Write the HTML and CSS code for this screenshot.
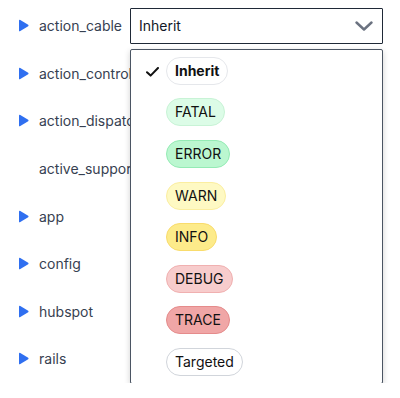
FILE: index.html
```html
<!DOCTYPE html>
<html lang="en">
<head>
    <meta charset="UTF-8">
    <meta name="viewport" content="width=device-width, initial-scale=1.0">
    <title>Log levels</title>
    <link rel="stylesheet" href="styles.css">
</head>
<body>
    <div class="tree">
        <div class="row">
            <span class="toggle"><svg width="11" height="13" viewBox="0 0 11 13"><path d="M1 1.6 Q1 0.2 2.3 0.9 L10.2 5.7 Q11 6.5 10.2 7.3 L2.3 12.1 Q1 12.8 1 11.4 Z" fill="#2f6ff0"/></svg></span>
            <span class="name">action_cable</span>
            <div class="picker">
                <div class="select">
                    <span>Inherit</span>
                    <svg class="chevron" width="18" height="10" viewBox="0 0 18 10"><path d="M1.5 1.5 L9 8.5 L16.5 1.5" fill="none" stroke="#6b7280" stroke-width="2.4" stroke-linecap="round" stroke-linejoin="round"/></svg>
                </div>
                <ul class="menu">
                    <li class="item">
                        <svg class="check" width="13" height="10" viewBox="0 0 13 10"><path d="M1 5.2 L4.6 8.6 L12 1" fill="none" stroke="#111" stroke-width="2" stroke-linecap="round" stroke-linejoin="round"/></svg>
                        <span class="pill pill-inherit">Inherit</span>
                    </li>
                    <li class="item"><span class="pill pill-fatal">FATAL</span></li>
                    <li class="item"><span class="pill pill-error">ERROR</span></li>
                    <li class="item"><span class="pill pill-warn">WARN</span></li>
                    <li class="item"><span class="pill pill-info">INFO</span></li>
                    <li class="item"><span class="pill pill-debug">DEBUG</span></li>
                    <li class="item"><span class="pill pill-trace">TRACE</span></li>
                    <li class="item"><span class="pill pill-targeted">Targeted</span></li>
                </ul>
            </div>
        </div>
        <div class="row">
            <span class="toggle"><svg width="11" height="13" viewBox="0 0 11 13"><path d="M1 1.6 Q1 0.2 2.3 0.9 L10.2 5.7 Q11 6.5 10.2 7.3 L2.3 12.1 Q1 12.8 1 11.4 Z" fill="#2f6ff0"/></svg></span>
            <span class="name">action_controller</span>
        </div>
        <div class="row">
            <span class="toggle"><svg width="11" height="13" viewBox="0 0 11 13"><path d="M1 1.6 Q1 0.2 2.3 0.9 L10.2 5.7 Q11 6.5 10.2 7.3 L2.3 12.1 Q1 12.8 1 11.4 Z" fill="#2f6ff0"/></svg></span>
            <span class="name">action_dispatch</span>
        </div>
        <div class="row">
            <span class="toggle"></span>
            <span class="name">active_support</span>
        </div>
        <div class="row">
            <span class="toggle"><svg width="11" height="13" viewBox="0 0 11 13"><path d="M1 1.6 Q1 0.2 2.3 0.9 L10.2 5.7 Q11 6.5 10.2 7.3 L2.3 12.1 Q1 12.8 1 11.4 Z" fill="#2f6ff0"/></svg></span>
            <span class="name">app</span>
        </div>
        <div class="row">
            <span class="toggle"><svg width="11" height="13" viewBox="0 0 11 13"><path d="M1 1.6 Q1 0.2 2.3 0.9 L10.2 5.7 Q11 6.5 10.2 7.3 L2.3 12.1 Q1 12.8 1 11.4 Z" fill="#2f6ff0"/></svg></span>
            <span class="name">config</span>
        </div>
        <div class="row">
            <span class="toggle"><svg width="11" height="13" viewBox="0 0 11 13"><path d="M1 1.6 Q1 0.2 2.3 0.9 L10.2 5.7 Q11 6.5 10.2 7.3 L2.3 12.1 Q1 12.8 1 11.4 Z" fill="#2f6ff0"/></svg></span>
            <span class="name">hubspot</span>
        </div>
        <div class="row">
            <span class="toggle"><svg width="11" height="13" viewBox="0 0 11 13"><path d="M1 1.6 Q1 0.2 2.3 0.9 L10.2 5.7 Q11 6.5 10.2 7.3 L2.3 12.1 Q1 12.8 1 11.4 Z" fill="#2f6ff0"/></svg></span>
            <span class="name">rails</span>
        </div>
    </div>
</body>
</html>
```
FILE: styles.css
```css
body {
    margin: 0;
    font-family: Inter, 'Noto Sans', sans-serif;
    font-size: 14px;
    color: #374151;
    background: #fff;
}
.tree {
    padding-top: 2px;
}
.row {
    display: flex;
    align-items: center;
    height: 47.6px;
    position: relative;
}
.toggle {
    width: 18px;
    padding-left: 18px;
    padding-right: 3px;
    display: flex;
    align-items: center;
}
.toggle svg {
    display: block;
}
.name {
    width: 91px;
    flex-shrink: 0;
    white-space: nowrap;
}
.picker {
    position: relative;
}
.select {
    width: 253px;
    height: 36px;
    box-sizing: border-box;
    border: 1px solid #1f2937;
    border-radius: 1px;
    display: flex;
    align-items: center;
    justify-content: space-between;
    padding: 0 9px 0 8px;
    color: #111827;
    background: #fff;
}
.chevron {
    display: block;
}
.menu {
    position: absolute;
    top: 41px;
    left: 0;
    width: 253px;
    height: 335px;
    box-sizing: border-box;
    margin: 0;
    padding: 7px 0 0 0;
    list-style: none;
    background: #fff;
    border: 1px solid #4b5563;
    border-radius: 2px;
    box-shadow: 0 2px 6px rgba(0, 0, 0, 0.18);
    z-index: 2;
}
.item {
    display: flex;
    align-items: center;
    height: 41.6px;
    padding-left: 35px;
    position: relative;
    box-sizing: border-box;
    padding-bottom: 13.6px;
}
.check {
    position: absolute;
    left: 15px;
    top: 10px;
}
.pill {
    display: inline-block;
    height: 28px;
    line-height: 26px;
    box-sizing: border-box;
    padding: 0 8px;
    border: 1px solid transparent;
    border-radius: 14px;
    color: #111;
    font-size: 14px;
}
.pill-inherit {
    font-weight: 700;
    border-color: #e5e7eb;
    background: #fff;
}
.pill-fatal {
    background: #dcfce7;
    border-color: #c8f3d6;
}
.pill-error {
    background: #bbf7d0;
    border-color: #94ebb4;
}
.pill-warn {
    background: #fef9c3;
    border-color: #fbeea0;
}
.pill-info {
    background: #fdeb8a;
    border-color: #f9dc6c;
}
.pill-debug {
    background: #f7cccc;
    border-color: #f0b0b0;
}
.pill-trace {
    background: #f0a6a6;
    border-color: #e58b8b;
}
.pill-targeted {
    background: #fff;
    border-color: #d1d5db;
}
```
